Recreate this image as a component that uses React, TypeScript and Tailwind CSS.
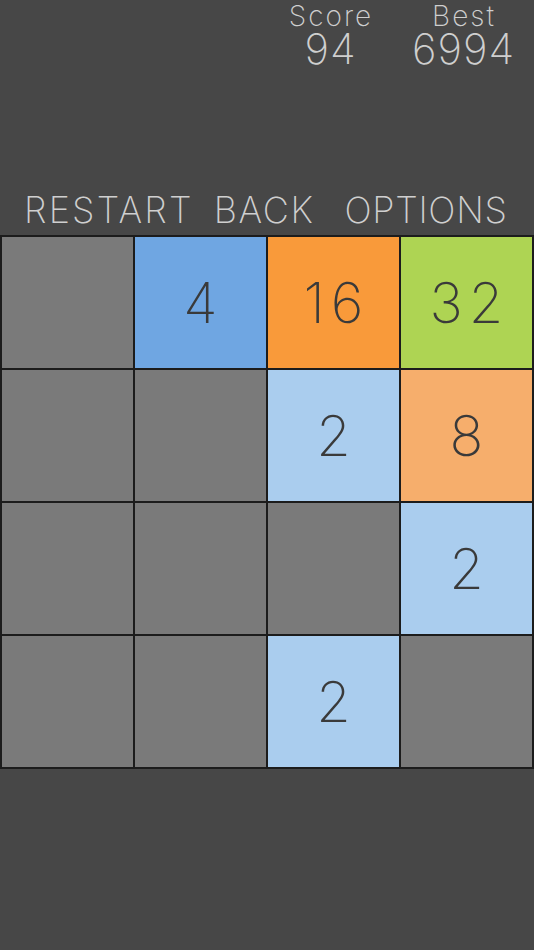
import React from "react";

const tileColors: Record<number, string> = {
  0: "bg-[#7a7a7a]",
  2: "bg-[#aacdee]",
  4: "bg-[#6fa6e2]",
  8: "bg-[#f6ae6c]",
  16: "bg-[#f99a3a]",
  32: "bg-[#aed453]",
};

const board = [
  [0, 4, 16, 32],
  [0, 0, 2, 8],
  [0, 0, 0, 2],
  [0, 0, 2, 0],
];

const ScoreBox: React.FC<{ label: string; value: number; width: string }> = ({
  label,
  value,
  width,
}) => (
  <div className={`${width} flex flex-col items-center text-[#cfcfcf] font-extralight`}>
    <span className="text-[28px] leading-[32px] tracking-[2px] pl-[2px]">{label}</span>
    <span className="text-[42px] leading-[34px] tracking-[1px] pl-[1px]">{value}</span>
  </div>
);

const App: React.FC = () => {
  return (
    <div
      className="w-[534px] h-[950px] bg-[#474747] flex flex-col"
      style={{ fontFamily: "Inter, 'Liberation Sans', sans-serif" }}
    >
      {/* scores */}
      <div className="flex h-[186px] pl-[265px]">
        <ScoreBox label="Score" value={94} width="w-[130px]" />
        <ScoreBox label="Best" value={6994} width="w-[136px]" />
      </div>

      {/* menu */}
      <div className="flex pl-[24px] h-[49px] text-[36px] leading-[48px] text-[#cfcfcf] font-extralight">
        <span className="tracking-[2.2px]">RESTART</span>
        <span className="ml-[20px] tracking-[1.6px]">BACK</span>
        <span className="ml-[30px] tracking-[0.7px]">OPTIONS</span>
      </div>

      {/* board */}
      <div className="bg-[#1c1c1c] p-[2px] grid grid-cols-4 gap-[2px]">
        {board.flat().map((v, i) => (
          <div
            key={i}
            className={`h-[131px] flex items-center justify-center ${tileColors[v]}`}
          >
            {v > 0 && (
              <span className="text-[56px] text-[#3a3a3a] font-extralight tracking-[6px] pl-[6px]">
                {v}
              </span>
            )}
          </div>
        ))}
      </div>
    </div>
  );
};

export default App;
